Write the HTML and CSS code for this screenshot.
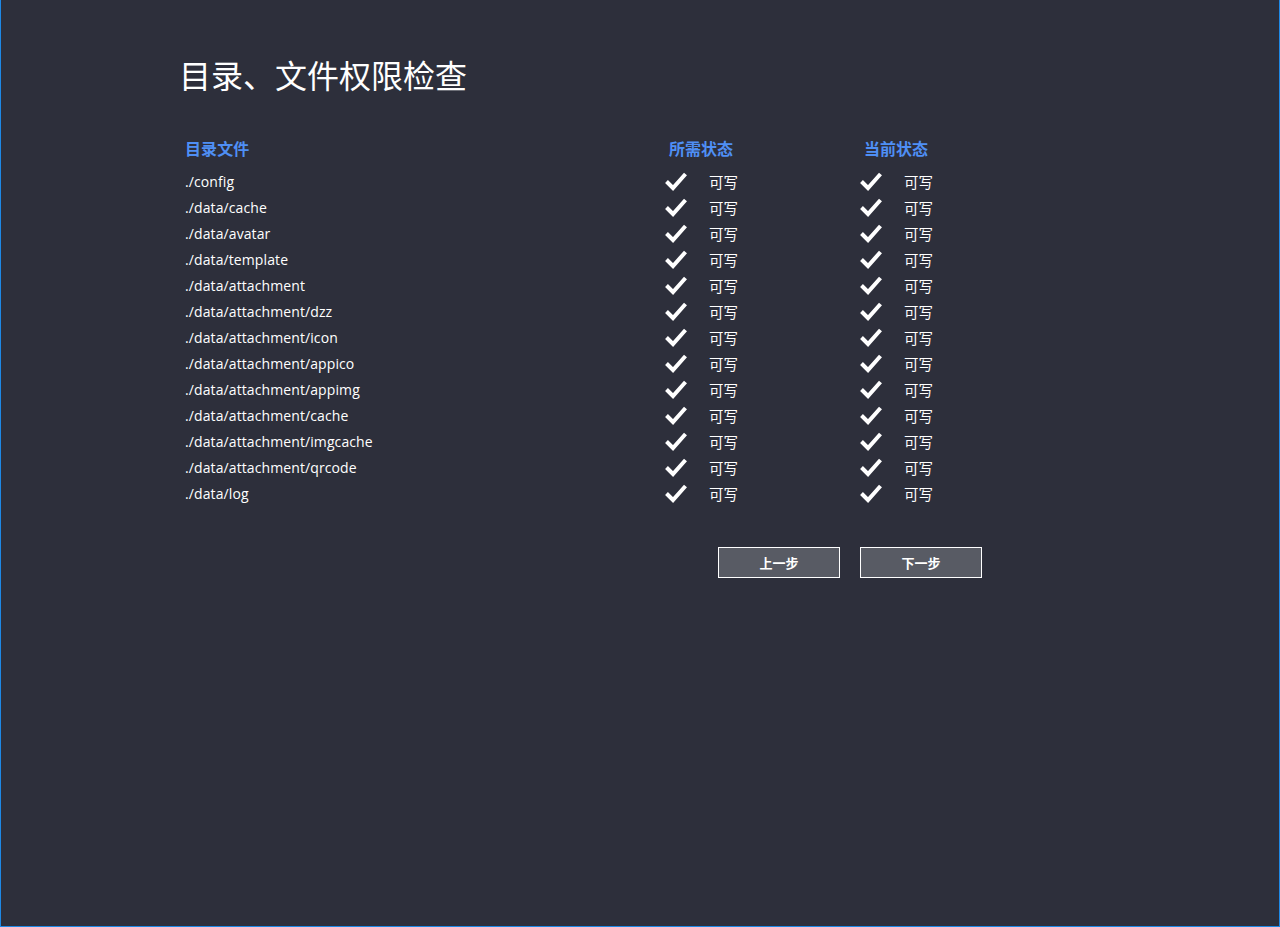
FILE: index.html
```html
<!DOCTYPE html>
<html lang="zh-CN">
<head>
<meta charset="utf-8">
<title>目录、文件权限检查</title>
<link rel="stylesheet" href="styles.css">
</head>
<body>
<div class="frame">
  <div class="content">
    <h1 class="title">目录、文件权限检查</h1>
    <div class="table">
      <div class="row head">
        <div class="c1">目录文件</div>
        <div class="c2">所需状态</div>
        <div class="c3">当前状态</div>
      </div>
      <div class="row"><div class="c1">./config</div><div class="c2"><svg class="ok" viewBox="0 0 24 20"><path d="M2.5 10.5 L9 17 L21.5 3"/></svg><span>可写</span></div><div class="c3"><svg class="ok" viewBox="0 0 24 20"><path d="M2.5 10.5 L9 17 L21.5 3"/></svg><span>可写</span></div></div>
      <div class="row"><div class="c1">./data/cache</div><div class="c2"><svg class="ok" viewBox="0 0 24 20"><path d="M2.5 10.5 L9 17 L21.5 3"/></svg><span>可写</span></div><div class="c3"><svg class="ok" viewBox="0 0 24 20"><path d="M2.5 10.5 L9 17 L21.5 3"/></svg><span>可写</span></div></div>
      <div class="row"><div class="c1">./data/avatar</div><div class="c2"><svg class="ok" viewBox="0 0 24 20"><path d="M2.5 10.5 L9 17 L21.5 3"/></svg><span>可写</span></div><div class="c3"><svg class="ok" viewBox="0 0 24 20"><path d="M2.5 10.5 L9 17 L21.5 3"/></svg><span>可写</span></div></div>
      <div class="row"><div class="c1">./data/template</div><div class="c2"><svg class="ok" viewBox="0 0 24 20"><path d="M2.5 10.5 L9 17 L21.5 3"/></svg><span>可写</span></div><div class="c3"><svg class="ok" viewBox="0 0 24 20"><path d="M2.5 10.5 L9 17 L21.5 3"/></svg><span>可写</span></div></div>
      <div class="row"><div class="c1">./data/attachment</div><div class="c2"><svg class="ok" viewBox="0 0 24 20"><path d="M2.5 10.5 L9 17 L21.5 3"/></svg><span>可写</span></div><div class="c3"><svg class="ok" viewBox="0 0 24 20"><path d="M2.5 10.5 L9 17 L21.5 3"/></svg><span>可写</span></div></div>
      <div class="row"><div class="c1">./data/attachment/dzz</div><div class="c2"><svg class="ok" viewBox="0 0 24 20"><path d="M2.5 10.5 L9 17 L21.5 3"/></svg><span>可写</span></div><div class="c3"><svg class="ok" viewBox="0 0 24 20"><path d="M2.5 10.5 L9 17 L21.5 3"/></svg><span>可写</span></div></div>
      <div class="row"><div class="c1">./data/attachment/icon</div><div class="c2"><svg class="ok" viewBox="0 0 24 20"><path d="M2.5 10.5 L9 17 L21.5 3"/></svg><span>可写</span></div><div class="c3"><svg class="ok" viewBox="0 0 24 20"><path d="M2.5 10.5 L9 17 L21.5 3"/></svg><span>可写</span></div></div>
      <div class="row"><div class="c1">./data/attachment/appico</div><div class="c2"><svg class="ok" viewBox="0 0 24 20"><path d="M2.5 10.5 L9 17 L21.5 3"/></svg><span>可写</span></div><div class="c3"><svg class="ok" viewBox="0 0 24 20"><path d="M2.5 10.5 L9 17 L21.5 3"/></svg><span>可写</span></div></div>
      <div class="row"><div class="c1">./data/attachment/appimg</div><div class="c2"><svg class="ok" viewBox="0 0 24 20"><path d="M2.5 10.5 L9 17 L21.5 3"/></svg><span>可写</span></div><div class="c3"><svg class="ok" viewBox="0 0 24 20"><path d="M2.5 10.5 L9 17 L21.5 3"/></svg><span>可写</span></div></div>
      <div class="row"><div class="c1">./data/attachment/cache</div><div class="c2"><svg class="ok" viewBox="0 0 24 20"><path d="M2.5 10.5 L9 17 L21.5 3"/></svg><span>可写</span></div><div class="c3"><svg class="ok" viewBox="0 0 24 20"><path d="M2.5 10.5 L9 17 L21.5 3"/></svg><span>可写</span></div></div>
      <div class="row"><div class="c1">./data/attachment/imgcache</div><div class="c2"><svg class="ok" viewBox="0 0 24 20"><path d="M2.5 10.5 L9 17 L21.5 3"/></svg><span>可写</span></div><div class="c3"><svg class="ok" viewBox="0 0 24 20"><path d="M2.5 10.5 L9 17 L21.5 3"/></svg><span>可写</span></div></div>
      <div class="row"><div class="c1">./data/attachment/qrcode</div><div class="c2"><svg class="ok" viewBox="0 0 24 20"><path d="M2.5 10.5 L9 17 L21.5 3"/></svg><span>可写</span></div><div class="c3"><svg class="ok" viewBox="0 0 24 20"><path d="M2.5 10.5 L9 17 L21.5 3"/></svg><span>可写</span></div></div>
      <div class="row"><div class="c1">./data/log</div><div class="c2"><svg class="ok" viewBox="0 0 24 20"><path d="M2.5 10.5 L9 17 L21.5 3"/></svg><span>可写</span></div><div class="c3"><svg class="ok" viewBox="0 0 24 20"><path d="M2.5 10.5 L9 17 L21.5 3"/></svg><span>可写</span></div></div>
    </div>
    <div class="actions">
      <button class="btn" type="button">上一步</button>
      <button class="btn" type="button">下一步</button>
    </div>
  </div>
</div>
</body>
</html>
```
FILE: styles.css
```css
html, body {
  margin: 0;
  padding: 0;
  height: 100%;
}
body {
  background: #2d2f3b;
  color: #ffffff;
  font-family: "Open Sans", "Noto Sans CJK SC", sans-serif;
}
.frame {
  box-sizing: border-box;
  height: 927px;
  border: 1px solid #1e88e5;
  border-top: none;
  background: #2d2f3b;
}
.content {
  padding-left: 180px;
  padding-top: 51px;
}
.title {
  margin: 0 0 0 -2px;
  font-family: "Noto Sans CJK SC", sans-serif;
  font-weight: 400;
  font-size: 32px;
  line-height: 46px;
  color: #ffffff;
}
.table {
  margin-top: 36px;
  padding-left: 4px;
}
.row {
  display: grid;
  grid-template-columns: 479px 195px 200px;
  height: 26px;
  align-items: center;
  font-size: 14px;
}
.row.head {
  height: 30px;
  margin-bottom: 5px;
  font-family: "Noto Sans CJK SC", sans-serif;
  font-weight: 700;
  font-size: 16px;
  color: #4f8ff5;
}
.row.head .c2, .row.head .c3 {
  padding-left: 5px;
}
.c1 {
  letter-spacing: 0.1px;
}
.c2, .c3 {
  display: flex;
  align-items: center;
}
.c2 span, .c3 span {
  font-family: "Noto Sans CJK SC", sans-serif;
  font-size: 14.5px;
  margin-left: 21px;
}
.ok {
  width: 24px;
  height: 20px;
  fill: none;
  stroke: #ffffff;
  stroke-width: 4;
  stroke-linecap: butt;
  stroke-linejoin: miter;
}
.actions {
  display: flex;
  gap: 20px;
  margin-top: 41px;
  padding-left: 537px;
}
.btn {
  box-sizing: border-box;
  width: 122px;
  height: 31px;
  background: #585b64;
  border: 1px solid #ffffff;
  color: #ffffff;
  font-family: "Noto Sans CJK SC", sans-serif;
  font-weight: 700;
  font-size: 13px;
  padding: 0;
}
```
